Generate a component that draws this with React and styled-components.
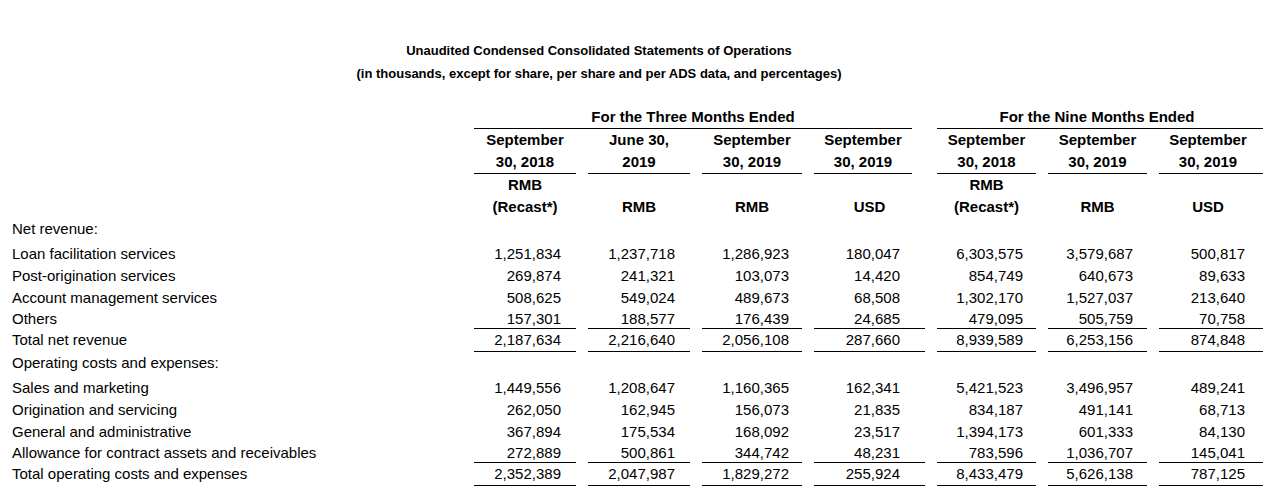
import React from 'react';
import styled, { createGlobalStyle } from 'styled-components';

const GlobalStyle = createGlobalStyle`
  html, body {
    margin: 0;
    padding: 0;
    background: #fff;
    overflow: hidden;
  }
  body {
    font-family: "Liberation Sans", Arial, sans-serif;
    font-size: 15px;
    color: #000;
  }
`;

// column grid shared by every row: label, then 7 figure columns
const COLS = '462px 102px 102px 100px 111px 99px 99px 104px';

// right padding of figures per column
const NUM_PAD = [15, 15, 13, 25, 13, 14, 18];
// header centring tweaks per column
const HEAD_PAD = [0, 0, 0, 0, 0, 0, 6];
const HEAD_INSET = [0, 0, 0, 13, 0, 0, 0];

const Page = styled.div`
  width: 1263px;
  padding-top: 39px;
`;

const Title = styled.div`
  width: 1198px;
  text-align: center;
  font-weight: bold;
  font-size: 13px;
  line-height: 23px;
  margin-bottom: 20px;
`;

const Row = styled.div`
  display: grid;
  grid-template-columns: ${COLS};
  column-gap: 12px;
  height: ${({ $h }) => $h}px;
  margin-bottom: ${({ $gap }) => $gap || 0}px;
`;

const Label = styled.div`
  padding-left: 12px;
  line-height: ${({ $h }) => $h}px;
  white-space: nowrap;
`;

const GroupHead = styled.div`
  grid-column: ${({ $col }) => $col};
  margin-right: ${({ $inset }) => $inset || 0}px;
  padding-right: ${({ $pad }) => $pad || 0}px;
  border-bottom: 1px solid #000;
  text-align: center;
  font-weight: bold;
  line-height: 23px;
  white-space: nowrap;
`;

const HeadCell = styled.div`
  margin-right: ${({ $inset }) => $inset}px;
  padding-right: ${({ $pad }) => $pad}px;
  border-bottom: ${({ $rule }) => ($rule ? '1px solid #000' : 'none')};
  text-align: center;
  font-weight: bold;
  line-height: 22px;
  white-space: nowrap;
`;

const Num = styled.div`
  box-sizing: border-box;
  height: 100%;
  padding-right: ${({ $pad }) => $pad}px;
  border-bottom: ${({ $rule }) => ($rule ? '1px solid #000' : 'none')};
  text-align: right;
  line-height: ${({ $h, $rule }) => $h - ($rule ? 1 : 0)}px;
  white-space: nowrap;
`;

const dates = [
  ['September', '30, 2018'],
  ['June 30,', '2019'],
  ['September', '30, 2019'],
  ['September', '30, 2019'],
  ['September', '30, 2018'],
  ['September', '30, 2019'],
  ['September', '30, 2019'],
];

const currencies = [
  ['RMB', '(Recast*)'],
  ['', 'RMB'],
  ['', 'RMB'],
  ['', 'USD'],
  ['RMB', '(Recast*)'],
  ['', 'RMB'],
  ['', 'USD'],
];

const revenue = [
  ['Loan facilitation services', '1,251,834', '1,237,718', '1,286,923', '180,047', '6,303,575', '3,579,687', '500,817'],
  ['Post-origination services', '269,874', '241,321', '103,073', '14,420', '854,749', '640,673', '89,633'],
  ['Account management services', '508,625', '549,024', '489,673', '68,508', '1,302,170', '1,527,037', '213,640'],
  ['Others', '157,301', '188,577', '176,439', '24,685', '479,095', '505,759', '70,758'],
  ['Total net revenue', '2,187,634', '2,216,640', '2,056,108', '287,660', '8,939,589', '6,253,156', '874,848'],
];

const costs = [
  ['Sales and marketing', '1,449,556', '1,208,647', '1,160,365', '162,341', '5,421,523', '3,496,957', '489,241'],
  ['Origination and servicing', '262,050', '162,945', '156,073', '21,835', '834,187', '491,141', '68,713'],
  ['General and administrative', '367,894', '175,534', '168,092', '23,517', '1,394,173', '601,333', '84,130'],
  ['Allowance for contract assets and receivables', '272,889', '500,861', '344,742', '48,231', '783,596', '1,036,707', '145,041'],
  ['Total operating costs and expenses', '2,352,389', '2,047,987', '1,829,272', '255,924', '8,433,479', '5,626,138', '787,125'],
];

function HeaderRow({ cells, rule }) {
  return (
    <Row $h={rule ? 45 : 44}>
      <div />
      {cells.map((lines, i) => (
        <HeadCell key={i} $rule={rule} $pad={HEAD_PAD[i]} $inset={rule ? HEAD_INSET[i] : 0}>
          {lines.map((l, j) => (
            <div key={j}>{l || '\u00a0'}</div>
          ))}
        </HeadCell>
      ))}
    </Row>
  );
}

function Section({ title, rows }) {
  return (
    <>
      <Row $h={22} $gap={3}>
        <Label $h={22}>{title}</Label>
      </Row>
      {rows.map((r, idx) => {
        const beforeTotal = idx === rows.length - 2;
        const isTotal = idx === rows.length - 1;
        const h = beforeTotal ? 20 : isTotal ? 23 : 22;
        const rule = beforeTotal || isTotal;
        return (
          <Row key={r[0]} $h={h}>
            <Label $h={beforeTotal ? 19 : 22}>{r[0]}</Label>
            {r.slice(1).map((v, i) => (
              <Num key={i} $h={h} $rule={rule} $pad={NUM_PAD[i]}>
                {v}
              </Num>
            ))}
          </Row>
        );
      })}
    </>
  );
}

export default function App() {
  return (
    <>
      <GlobalStyle />
      <Page>
        <Title>
          <div>Unaudited Condensed Consolidated Statements of Operations</div>
          <div>(in thousands, except for share, per share and per ADS data, and percentages)</div>
        </Title>
        <Row $h={24}>
          <div />
          <GroupHead $col="2 / span 4" $inset={13}>For the Three Months Ended</GroupHead>
          <GroupHead $col="6 / span 3" $pad={6}>For the Nine Months Ended</GroupHead>
        </Row>
        <HeaderRow cells={dates} rule />
        <HeaderRow cells={currencies} />
        <Section title="Net revenue:" rows={revenue} />
        <Section title="Operating costs and expenses:" rows={costs} />
      </Page>
    </>
  );
}
